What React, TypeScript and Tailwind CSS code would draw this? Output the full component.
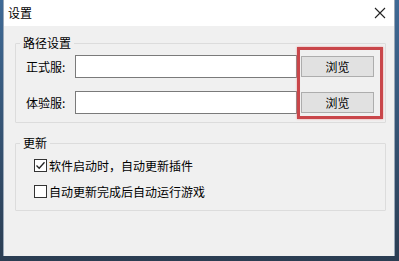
import React from "react";

const font = { fontFamily: '"Noto Sans CJK SC", "Microsoft YaHei", sans-serif' };

const PathRow = ({ label }: { label: string }) => (
  <div className="flex items-center h-[23px]">
    <span className="w-[59px] pl-[10px] text-[12px] text-black leading-none">{label}</span>
    <div className="w-[222px] h-[23px] bg-white border border-[#7a7a7a]" />
    <button className="ml-[4px] w-[73px] h-[21px] bg-[#e1e1e1] border border-[#adadad] text-[12px] leading-none text-black">
      浏览
    </button>
  </div>
);

const Check = ({ checked, label }: { checked?: boolean; label: string }) => (
  <label className="flex items-center h-[13px] gap-[2px]">
    <span className="w-[13px] h-[13px] bg-white border border-[#333] flex items-center justify-center">
      {checked && (
        <svg width="11" height="11" viewBox="0 0 11 11">
          <path d="M1.5 5.5 L4.2 8.3 L9.5 2.2" fill="none" stroke="#222" strokeWidth="1.3" />
        </svg>
      )}
    </span>
    <span className="text-[12px] leading-none text-black">{label}</span>
  </label>
);

export default function App() {
  return (
    <div className="w-[399px] h-[261px] overflow-hidden bg-gradient-to-b from-[#3f6a96] to-[#2b3d52]" style={font}>
      <div className="ml-[3px] w-[392px] h-[256px] bg-[#f0f0f0] border-l border-r border-[#9aa8b8] flex flex-col">
        <div className="h-[26px] bg-white flex items-center justify-between pl-[4px] pr-[8px]">
          <span className="text-[12px] text-black leading-none">设置</span>
          <svg width="12" height="12" viewBox="0 0 12 12">
            <path d="M1 1 L11 11 M11 1 L1 11" stroke="#222" strokeWidth="1.1" />
          </svg>
        </div>

        <fieldset className="relative ml-[11px] mt-[9px] w-[371px] h-[88px] border border-[#dcdcdc] rounded-[1px]">
          <legend className="ml-[4px] px-[3px] text-[12px] leading-[16px] text-black">路径设置</legend>
          <div className="flex flex-col gap-[13px] mt-[4px]">
            <PathRow label="正式服:" />
            <PathRow label="体验服:" />
          </div>
          <div className="absolute left-[281px] top-[-4px] w-[86px] h-[72px] border-[3px] border-[#c9464a] shadow-[0_0_2px_#e89a9a]" />
        </fieldset>

        <fieldset className="ml-[11px] mt-[12px] w-[371px] h-[76px] border border-[#dcdcdc] rounded-[1px]">
          <legend className="ml-[4px] px-[3px] text-[12px] leading-[16px] text-black">更新</legend>
          <div className="flex flex-col gap-[13px] pl-[18px] mt-[8px]">
            <Check checked label="软件启动时，自动更新插件" />
            <Check label="自动更新完成后自动运行游戏" />
          </div>
        </fieldset>
      </div>
    </div>
  );
}
